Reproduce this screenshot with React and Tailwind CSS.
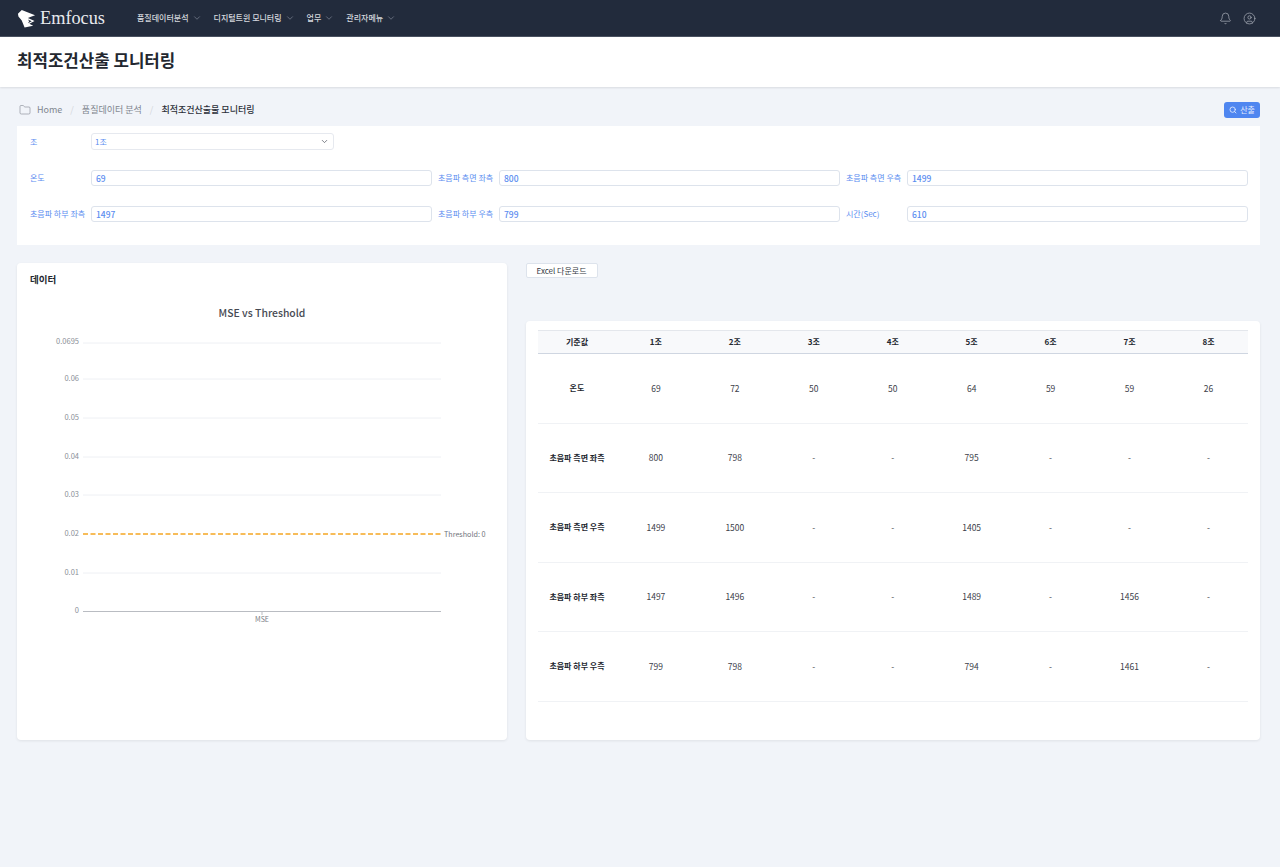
import React from 'react';
import { ChevronDown, Bell, CircleUser, Folder, Search } from 'lucide-react';

const font = { fontFamily: '"Noto Sans CJK KR", sans-serif' };

const menus = ['품질데이터분석', '디지털트윈 모니터링', '업무', '관리자메뉴'];

const fields = [
  ['온도', '69'],
  ['초음파 측면 좌측', '800'],
  ['초음파 측면 우측', '1499'],
  ['초음파 하부 좌측', '1497'],
  ['초음파 하부 우측', '799'],
  ['시간(Sec)', '610'],
];

const headers = ['기준값', '1조', '2조', '3조', '4조', '5조', '6조', '7조', '8조'];

const rows = [
  ['온도', '69', '72', '50', '50', '64', '59', '59', '26'],
  ['초음파 측면 좌측', '800', '798', '-', '-', '795', '-', '-', '-'],
  ['초음파 측면 우측', '1499', '1500', '-', '-', '1405', '-', '-', '-'],
  ['초음파 하부 좌측', '1497', '1496', '-', '-', '1489', '-', '1456', '-'],
  ['초음파 하부 우측', '799', '798', '-', '-', '794', '-', '1461', '-'],
];

const ticks = [
  ['0.0695', 343, 343.5],
  ['0.06', 379, 380.5],
  ['0.05', 418, 419.5],
  ['0.04', 457, 458.5],
  ['0.03', 495, 496.5],
  ['0.01', 573, 574.5],
];

const Logo = () => (
  <svg viewBox="0 0 20 20" className="w-[19px] h-[19px]">
    <path d="M1 5 L5 1 L9 2.5 L19 6.5 L14 8.5 L11.5 9.5 L18.5 12.5 L13 15.5 L17 17.5 L8 19.5 L5 12 L1.5 8 Z" fill="#fff" />
    <path d="M11.5 11 L15.5 12.8 L11.5 15 L12.8 12.8 Z" fill="#222b3c" />
  </svg>
);

const Chart = () => (
  <svg viewBox="30 296 456 340" className="w-[456px] h-[340px] mt-[10px]">
    <text x="262" y="317" textAnchor="middle" fontSize="10.4" fontWeight="500" fill="#464a52">MSE vs Threshold</text>
    {ticks.map(([label, y, ty]) => (
      <g key={label}>
        <line x1="83" x2="441" y1={y} y2={y} stroke="#eef0f4" />
        <text x="79" y={ty} textAnchor="end" fontSize="7.5" fill="#8b8f97">{label}</text>
      </g>
    ))}
    <text x="79" y="536" textAnchor="end" fontSize="7.5" fill="#8b8f97">0.02</text>
    <line x1="83" x2="441" y1="534" y2="534" stroke="#f5a623" strokeWidth="1.5" strokeDasharray="5 2.5" />
    <text x="444" y="537" fontSize="7.2" fill="#6e7279">Threshold: 0.02</text>
    <text x="79" y="613" textAnchor="end" fontSize="7.5" fill="#8b8f97">0</text>
    <line x1="83" x2="441" y1="611.5" y2="611.5" stroke="#b9bcc2" strokeWidth="1.2" />
    <line x1="262" x2="262" y1="612" y2="615" stroke="#b9bcc2" />
    <text x="262" y="622" textAnchor="middle" fontSize="7" fill="#7a7e86">MSE</text>
  </svg>
);

export default function App() {
  return (
    <div className="min-h-screen bg-[#f1f4f9] text-[#1f2430]" style={font}>
      <header className="h-[37px] bg-[#222b3c] border-b border-[#4a5261] flex items-center justify-between pl-[17px] pr-[24px]">
        <div className="flex items-center">
          <Logo />
          <span className="ml-[4px] w-[97px] text-[18.3px] leading-none text-[#e8eaee]" style={{ fontFamily: '"Liberation Serif", serif' }}>Emfocus</span>
          <nav className="flex items-center gap-[12px]">
            {menus.map((m) => (
              <div key={m} className="flex items-center gap-[3px] text-[8px] font-medium text-[#d5d8de]">
                {m}
                <ChevronDown className="w-[10px] h-[10px] text-[#8a91a0]" strokeWidth={1.5} />
              </div>
            ))}
          </nav>
        </div>
        <div className="flex items-center gap-[11px] text-[#a3a8b2]">
          <Bell className="w-[13px] h-[13px]" strokeWidth={1.4} />
          <CircleUser className="w-[13px] h-[13px]" strokeWidth={1.4} />
        </div>
      </header>

      <div className="h-[50px] bg-white shadow-[0_1px_2px_rgba(0,0,0,0.1)] flex items-center px-[17px] pb-[2px]">
        <h1 className="text-[16.8px] font-semibold text-[#23272f]">최적조건산출 모니터링</h1>
      </div>

      <div className="h-[39px] flex items-center justify-between pl-[19px] pr-[20px] pt-[6px]">
        <div className="flex items-center text-[9px] text-[#80858e]">
          <Folder className="w-[12px] h-[12px] mr-[6px]" strokeWidth={1.2} />
          <span>Home</span>
          <span className="mx-[8px] text-[#d3d6db]">/</span>
          <span>품질데이터 분석</span>
          <span className="mx-[8px] text-[#d3d6db]">/</span>
          <span className="text-[#2c3039] font-medium">최적조건산출물 모니터링</span>
        </div>
        <button className="h-[16px] w-[36px] rounded-[3px] bg-[#4f86f0] text-[#e4ecfd] text-[8px] flex items-center justify-center gap-[3px]">
          <Search className="w-[8px] h-[8px]" strokeWidth={2.5} />
          산출
        </button>
      </div>

      <section className="ml-[17px] mr-[20px] h-[119px] bg-white pl-[13px] pr-[12px] pt-[7px]">
        <div className="flex items-center h-[17px]">
          <label className="w-[61px] text-[8px] text-[#5b8df0]">조</label>
          <div className="w-[243px] h-[17px] border border-[#e6e9ef] rounded-[3px] flex items-center justify-between pl-[3px] pr-[4px] text-[8px] text-[#5b8df0]">
            1조
            <ChevronDown className="w-[9px] h-[9px] text-[#555b66]" strokeWidth={2} />
          </div>
        </div>
        <div className="grid grid-cols-3 gap-x-[6px] gap-y-[20px] mt-[20px]">
          {fields.map(([label, value]) => (
            <div key={label} className="flex items-center h-[16px]">
              <label className="w-[61px] shrink-0 text-[8px] whitespace-nowrap text-[#5b8df0]">{label}</label>
              <div className="flex-1 h-[16px] border border-[#dde3ec] rounded-[3px] pl-[4px] flex items-center text-[8.5px] font-medium text-[#5b8df0]">{value}</div>
            </div>
          ))}
        </div>
      </section>

      <div className="ml-[17px] mr-[20px] mt-[18px] flex gap-[18.5px]">
        <section className="w-[490px] h-[477px] bg-white rounded-[4px] shadow-[0_1px_3px_rgba(0,0,0,0.08)] pl-[13px] pt-[9px]">
          <h2 className="text-[9.5px] leading-[14px] font-semibold text-[#23272f]">데이터</h2>
          <Chart />
        </section>

        <div className="flex-1 flex flex-col">
          <button className="self-start h-[15px] w-[72px] bg-white border border-[#dde3ec] rounded-[2px] text-[8px] text-[#333842]">Excel 다운로드</button>
          <section className="mt-[43px] h-[419px] bg-white rounded-[4px] shadow-[0_1px_3px_rgba(0,0,0,0.08)] px-[12px] pt-[9px]">
            <table className="w-full table-fixed text-[8px]">
              <thead>
                <tr className="h-[23px] bg-[#f8f9fb] border-t border-[#e4e7ec] border-b border-b-[#cfd6e1]">
                  {headers.map((h) => (
                    <th key={h} className="font-semibold text-[#23272f]">{h}</th>
                  ))}
                </tr>
              </thead>
              <tbody>
                {rows.map((row) => (
                  <tr key={row[0]} className="h-[69.5px] border-b border-[#f0f2f5]">
                    {row.map((c, i) => (
                      <td key={i} className={i === 0 ? 'text-center font-semibold text-[#23272f]' : 'text-center text-[8.5px] text-[#3c4049]'}>{c}</td>
                    ))}
                  </tr>
                ))}
              </tbody>
            </table>
          </section>
        </div>
      </div>
    </div>
  );
}
